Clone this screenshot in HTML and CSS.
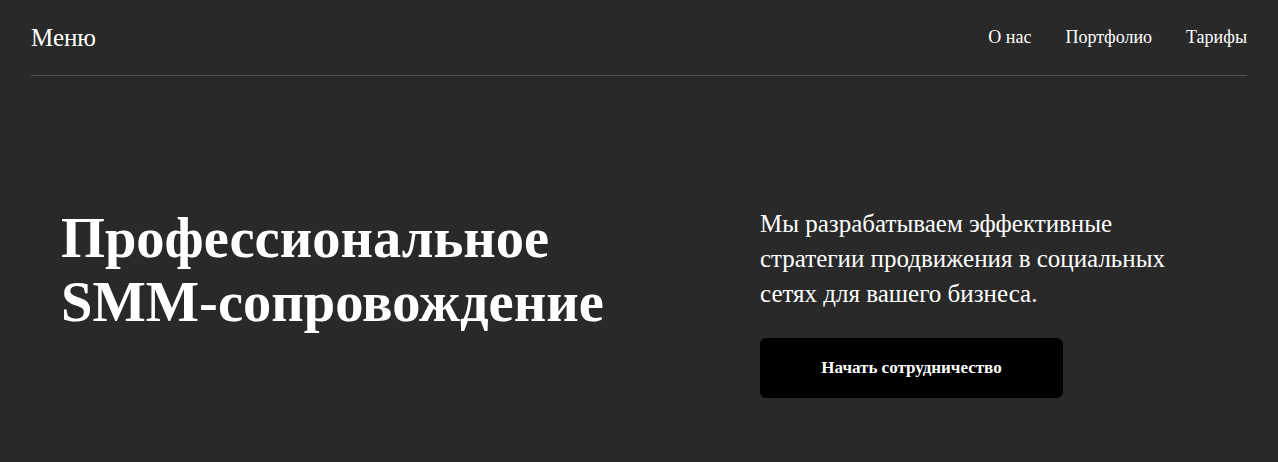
FILE: index.html
```html
<!DOCTYPE html>
<html lang="ru">
  <head>
    <meta charset="UTF-8" />
    <meta name="viewport" content="width=device-width, initial-scale=1.0" />
    <title>SMM</title>
    <link rel="stylesheet" href="styles.css">
  </head>
  <body>
    <header class="topbar">
      <a class="menu" href="#">Меню</a>
      <nav class="links">
        <a href="#">О нас</a>
        <a href="#">Портфолио</a>
        <a href="#">Тарифы</a>
      </nav>
    </header>

    <main class="hero">
      <h1 class="hero-title">Профессиональное<br />SMM-сопровождение</h1>
      <div class="hero-side">
        <p class="hero-text">
          Мы разрабатываем эффективные<br />
          стратегии продвижения в социальных<br />
          сетях для вашего бизнеса.
        </p>
        <button class="cta">Начать сотрудничество</button>
      </div>
    </main>
  </body>
</html>
```

FILE: styles.css
```css
* {
  box-sizing: border-box;
  margin: 0;
  padding: 0;
}

body {
  background: #292929;
  color: #fff;
  font-family: "Liberation Serif", "Times New Roman", serif;
  height: 462px;
  overflow: hidden;
}

a {
  color: inherit;
  text-decoration: none;
}

.topbar {
  display: flex;
  justify-content: space-between;
  align-items: center;
  margin: 0 31px;
  height: 76px;
  border-bottom: 1px solid #555;
}

.menu {
  font-size: 25px;
}

.links {
  display: flex;
  gap: 34px;
  font-size: 18px;
}

.hero {
  display: grid;
  grid-template-columns: 1fr 457px;
  padding: 130px 61px 0;
}

.hero-title {
  font-size: 56.5px;
  font-weight: 700;
  line-height: 64px;
}

.hero-text {
  font-size: 25px;
  line-height: 35px;
}

.cta {
  margin-top: 27px;
  width: 303px;
  height: 60px;
  border: none;
  border-radius: 6px;
  background: #000;
  color: #fff;
  font-family: inherit;
  font-size: 17px;
  font-weight: 700;
}
```
